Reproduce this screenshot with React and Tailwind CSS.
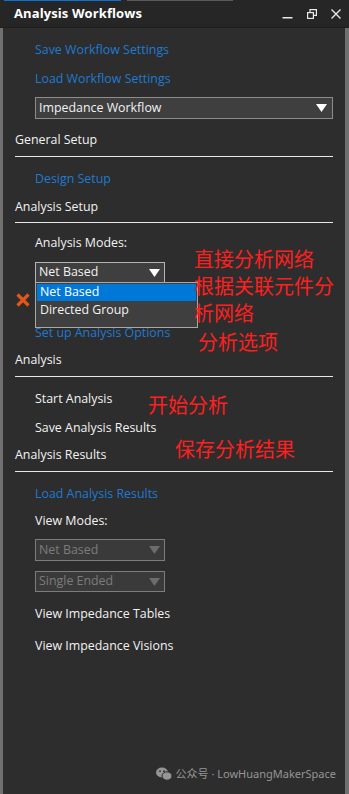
import React from "react";

const font = { fontFamily: '"Open Sans", "Noto Sans", sans-serif' };

function Tri({ className }) {
  return (
    <svg width="11" height="8" viewBox="0 0 11 8" className={className}>
      <polygon points="0,0 11,0 5.5,8" fill="currentColor" />
    </svg>
  );
}

function Row({ h = 20, className = "", children }) {
  return (
    <div className={`flex items-center shrink-0 pt-px ${className}`} style={{ height: h }}>
      {children}
    </div>
  );
}

function Gap({ h }) {
  return <div className="shrink-0" style={{ height: h }} />;
}

function Header({ children }) {
  return (
    <div className="pl-[12px] pr-[12px] shrink-0">
      <div className="h-[20px] pt-px flex items-center text-[12.4px] text-[#f2f2f2]">{children}</div>
    </div>
  );
}

function Line() {
  return <div className="ml-[12px] mr-[12px] h-px bg-[#e8e8e8] shrink-0" />;
}

const link = "pl-[32px] text-[12.4px] text-[#1f7ad2]";
const item = "pl-[32px] text-[12.4px] text-[#f2f2f2]";

export default function App() {
  return (
    <div className="w-[349px] h-[794px] bg-[#2d2d2d] flex flex-col overflow-hidden relative" style={font}>
      {/* Title bar */}
      <div className="h-[28px] shrink-0 bg-[#262626] relative flex items-center border-b border-[#1e1e1e]">
        <div className="absolute top-0 left-[4px] w-[117px] h-px bg-[#0a74d6]" />
        <div className="absolute top-0 left-[127px] w-[106px] h-px bg-[#5a5a5a]" />
        <div className="pl-[14px] text-[13px] font-bold text-white tracking-[0.1px]">Analysis Workflows</div>
        <div className="ml-auto flex items-center gap-[14px] pr-[8px] text-[#e8e8e8]">
          <svg width="11" height="12" viewBox="0 0 11 12">
            <rect x="0.5" y="9" width="10" height="1.5" fill="currentColor" />
          </svg>
          <svg width="10" height="10" viewBox="0 0 10 10" fill="none" stroke="currentColor" strokeWidth="1.2">
            <rect x="0.6" y="3.6" width="5.8" height="5.8" />
            <path d="M3 3.6V0.6H9.4V6.4H6.4" />
          </svg>
          <svg width="10" height="10" viewBox="0 0 10 10" stroke="currentColor" strokeWidth="1.4">
            <path d="M0.5 0.5L9.5 9.5M9.5 0.5L0.5 9.5" />
          </svg>
        </div>
      </div>

      {/* body with borders */}
      <div className="flex-1 flex border-l-[3px] border-r-[4px] border-[#707070]">
        <div className="flex-1 flex flex-col">
          <Gap h={12} />
          <Row className={link}>Save Workflow Settings</Row>
          <Gap h={9} />
          <Row className={link}>Load Workflow Settings</Row>
          <Gap h={8} />
          <div className="shrink-0 ml-[32px] mr-[12px] h-[22px] bg-[#3f3f3f] border border-[#8c8c8c] flex items-center pl-[3px] pr-[5px]">
            <span className="text-[12.4px] text-[#f2f2f2]">Impedance Workflow</span>
            <Tri className="ml-auto text-white" />
          </div>
          <Gap h={11} />
          <Header>General Setup</Header>
          <Gap h={6} />
          <Line />
          <Gap h={12} />
          <Row className={link}>Design Setup</Row>
          <Gap h={8} />
          <Header>Analysis Setup</Header>
          <Gap h={5} />
          <Line />
          <Gap h={10} />
          <Row className={item}>Analysis Modes:</Row>
          <Gap h={9} />
          <div className="shrink-0 relative ml-[32px] w-[130px] h-[21px] bg-[#3f3f3f] border border-[#b4b4b4] flex items-center pl-[3px] pr-[4px] z-10">
            <span className="text-[12.4px] text-[#f2f2f2]">Net Based</span>
            <Tri className="ml-auto text-white" />
            {/* open list */}
            <div className="absolute left-[-1px] top-[19px] w-[163px] h-[46px] bg-[#3f3f3f] border border-[#a8a8a8] p-px flex flex-col">
              <div className="h-[17px] bg-[#0078d7] flex items-center pl-[3px] text-[12.4px] text-white">Net Based</div>
              <div className="h-[18px] flex items-center pl-[3px] text-[12.4px] text-[#f2f2f2]">Directed Group</div>
            </div>
          </div>
          <div className="shrink-0 h-[40px] flex items-start pl-[13px] pt-[10px]">
            <svg width="14" height="14" viewBox="0 0 14 14" stroke="#e0561c" strokeWidth="3.2">
              <path d="M1.5 1.5L12.5 12.5M12.5 1.5L1.5 12.5" />
            </svg>
          </div>
          <Row className={link}>Set up Analysis Options</Row>
          <Gap h={7} />
          <Header>Analysis</Header>
          <Gap h={6} />
          <Line />
          <Gap h={12} />
          <Row className={item}>Start Analysis</Row>
          <Gap h={9} />
          <Row className={item}>Save Analysis Results</Row>
          <Gap h={7} />
          <Header>Analysis Results</Header>
          <Gap h={6} />
          <Line />
          <Gap h={12} />
          <Row className={link}>Load Analysis Results</Row>
          <Gap h={7} />
          <Row className={item}>View Modes:</Row>
          <Gap h={8} />
          <div className="shrink-0 ml-[32px] w-[130px] h-[22px] bg-[#3a3a3a] border border-[#7c7c7c] flex items-center pl-[3px] pr-[4px]">
            <span className="text-[12.4px] text-[#7c7c7c]">Net Based</span>
            <Tri className="ml-auto text-[#6c6c6c]" />
          </div>
          <Gap h={10} />
          <div className="shrink-0 ml-[32px] w-[130px] h-[21px] bg-[#3a3a3a] border border-[#7c7c7c] flex items-center pl-[3px] pr-[4px]">
            <span className="text-[12.4px] text-[#7c7c7c]">Single Ended</span>
            <Tri className="ml-auto text-[#6c6c6c]" />
          </div>
          <Gap h={12} />
          <Row className={item}>View Impedance Tables</Row>
          <Gap h={12} />
          <Row className={item}>View Impedance Visions</Row>
          <div className="flex-1" />
          <div className="shrink-0 h-[30px] flex items-center justify-end pr-[9px] text-[11px] text-[#959595] gap-[4px]">
            <svg width="16" height="14" viewBox="0 0 16 14" fill="#959595">
              <ellipse cx="6" cy="5.5" rx="6" ry="5" />
              <ellipse cx="11" cy="9" rx="5" ry="4.2" stroke="#2d2d2d" strokeWidth="1" />
              <circle cx="4" cy="4.2" r="0.9" fill="#2d2d2d" />
              <circle cx="8" cy="4.2" r="0.9" fill="#2d2d2d" />
            </svg>
            <span style={{ fontFamily: '"Noto Sans", "Noto Sans CJK SC", sans-serif' }}>公众号 · LowHuangMakerSpace</span>
          </div>
          <Gap h={5} />
        </div>
      </div>

      {/* red annotations */}
      <div
        className="absolute left-[194px] top-[245px] text-[20px] leading-[27px] text-[#ff1f1f] z-20"
        style={{ fontFamily: '"Noto Sans CJK SC", sans-serif' }}
      >
        <div>直接分析网络</div>
        <div>根据关联元件分</div>
        <div>析网络</div>
        <div className="pl-[4px] leading-[31px]">分析选项</div>
      </div>
      <div
        className="absolute left-[148px] top-[391px] text-[20px] leading-[27px] text-[#ff1f1f] z-20"
        style={{ fontFamily: '"Noto Sans CJK SC", sans-serif' }}
      >
        开始分析
      </div>
      <div
        className="absolute left-[175px] top-[435px] text-[20px] leading-[27px] text-[#ff1f1f] z-20"
        style={{ fontFamily: '"Noto Sans CJK SC", sans-serif' }}
      >
        保存分析结果
      </div>
    </div>
  );
}
